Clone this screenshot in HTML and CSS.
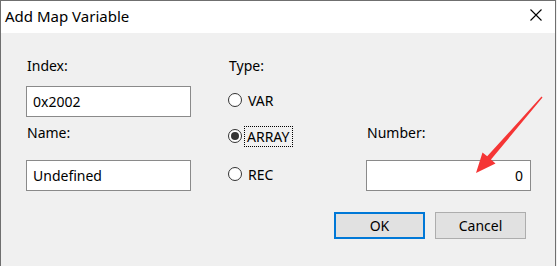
FILE: index.html
```html
<!DOCTYPE html>
<html lang="en">
<head>
    <meta charset="UTF-8">
    <title>Add Map Variable</title>
    <link rel="stylesheet" href="styles.css">
</head>
<body>
    <div class="window">
        <header class="titlebar">
            <span class="title">Add Map Variable</span>
            <svg class="close" width="12" height="12" viewBox="0 0 12 12">
                <path d="M0.5 0.5 L11.5 11.5 M11.5 0.5 L0.5 11.5" stroke="#000" stroke-width="1.1" fill="none"/>
            </svg>
        </header>

        <section class="content">
            <div class="form">
                <label class="lbl col1 row1" for="index-input">Index:</label>
                <span class="lbl col2 row1">Type:</span>

                <input class="field col1 row2" id="index-input" type="text" value="0x2002">
                <div class="radio col2 row2"><span class="circle"></span><span class="text">VAR</span></div>

                <label class="lbl col1 row3" for="name-input">Name:</label>
                <div class="radio col2 row3"><span class="circle checked"></span><span class="text focus">ARRAY</span></div>
                <label class="lbl col3 row3" for="number-input">Number:</label>

                <input class="field col1 row4" id="name-input" type="text" value="Undefined">
                <div class="radio col2 row4"><span class="circle"></span><span class="text">REC</span></div>
                <input class="field number col3 row4" id="number-input" type="text" value="0">
            </div>

            <div class="buttons">
                <button class="btn default">OK</button>
                <button class="btn">Cancel</button>
            </div>
        </section>

        <!-- roter Pfeil auf das Number-Feld -->
        <svg class="arrow" width="557" height="266" viewBox="0 0 557 266">
            <polygon points="542.5,97.5 491,159.5 495.5,163.5 476,173 482.5,152.5 487.2,156.3 541.5,96.6" fill="#f53535"/>
        </svg>
    </div>
</body>
</html>
```

FILE: styles.css
```css
body {
    margin: 0;
    padding: 0;
    background-color: #f0f0f0;
    font-family: 'Noto Sans', 'Open Sans', sans-serif;
    color: #000;
}

.window {
    position: relative;
    width: 556px;
    height: 266px;
    box-sizing: border-box;
    border: 1px solid #6f6f6f;
    border-bottom: none;
    background-color: #f0f0f0;
    overflow: hidden;
}

.titlebar {
    height: 32px;
    background-color: #fff;
    display: flex;
    align-items: center;
    justify-content: space-between;
    padding: 0 13px 0 4px;
}

.title {
    font-size: 15px;
    margin-top: -2px;
}

.close {
    display: block;
    margin-top: -4px;
}

.content {
    padding: 23px 29px 0 25px;
}

.form {
    display: grid;
    grid-template-columns: 165px 101px 165px;
    grid-template-rows: 24px 31px 31px 31px;
    column-gap: 37px;
    row-gap: 6px;
}

.col1 { grid-column: 1; }
.col2 { grid-column: 2; }
.col3 { grid-column: 3; }
.row1 { grid-row: 1; }
.row2 { grid-row: 2; }
.row3 { grid-row: 3; }
.row4 { grid-row: 4; }

.lbl {
    font-size: 14px;
    line-height: 20px;
    align-self: start;
    padding-left: 1px;
}

.field {
    box-sizing: border-box;
    width: 165px;
    height: 31px;
    margin: 0;
    border: 1px solid #8a8a8a;
    background-color: #fff;
    padding: 0 6px;
    font-family: inherit;
    font-size: 14px;
    color: #000;
    outline: none;
}

.number {
    text-align: right;
    padding-right: 7px;
}

.radio {
    display: flex;
    align-items: center;
    gap: 5px;
    height: 20px;
    align-self: start;
    margin-top: 4px;
    font-size: 14px;
}

.radio.row3 {
    margin-top: 3px;
}

.circle {
    box-sizing: border-box;
    width: 14px;
    height: 14px;
    border: 1px solid #333;
    border-radius: 50%;
    background-color: #fff;
    display: flex;
    align-items: center;
    justify-content: center;
}

.circle.checked::after {
    content: '';
    width: 8px;
    height: 8px;
    border-radius: 50%;
    background-color: #333;
}

.text {
    line-height: 19px;
    padding: 0 1px;
}

.focus {
    outline: 1px dotted #000;
    margin-left: -2px;
    padding: 0 3px 0 2px;
}

.buttons {
    display: flex;
    justify-content: flex-end;
    gap: 10px;
    margin-top: 21px;
}

.btn {
    box-sizing: border-box;
    width: 91px;
    height: 27px;
    margin: 0;
    background-color: #e1e1e1;
    border: 1px solid #adadad;
    font-family: inherit;
    font-size: 14px;
    color: #000;
    padding: 0;
}

.btn.default {
    border: 2px solid #0078d7;
}

.arrow {
    position: absolute;
    left: -1px;
    top: -1px;
    pointer-events: none;
}
```
